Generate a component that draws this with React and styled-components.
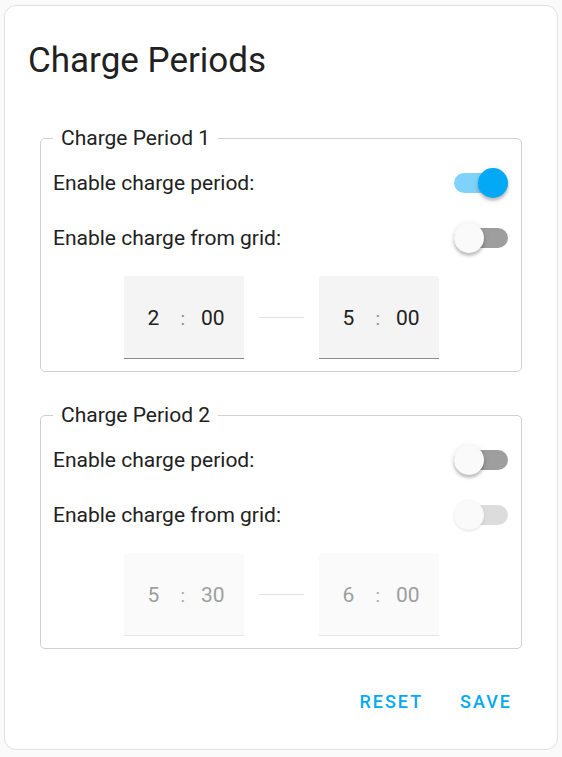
import React from "react";
import styled, { createGlobalStyle } from "styled-components";

const GlobalStyle = createGlobalStyle`
  html, body {
    margin: 0;
    padding: 0;
    background: #fafafa;
    font-family: Roboto, "Noto Sans", sans-serif;
    color: #212121;
  }
`;

const Page = styled.div`
  padding: 5px 4px 4px;
`;

const Card = styled.div`
  background: #fff;
  border: 1px solid #e0e0e0;
  border-radius: 12px;
  height: 745px;
  box-sizing: border-box;
  display: flex;
  flex-direction: column;
`;

const Title = styled.h1`
  margin: 0;
  padding: 35px 0 0 23px;
  font-size: 35px;
  font-weight: 400;
  line-height: 40px;
  color: #212121;
`;

const Periods = styled.div`
  display: flex;
  flex-direction: column;
  gap: 31px;
  padding: 45px 35px 0;
`;

const Fieldset = styled.fieldset`
  margin: 0;
  border: 1px solid #d0d0d0;
  border-radius: 5px;
  padding: 4px 12px 12px;
  min-width: 0;
`;

const Legend = styled.legend`
  padding: 0 8px;
  font-size: 21px;
  line-height: 25px;
  color: #212121;
`;

const Row = styled.div`
  display: flex;
  align-items: center;
  justify-content: space-between;
  height: 55px;
`;

const Label = styled.span`
  font-size: 21px;
  color: #212121;
`;

const Track = styled.div`
  position: relative;
  width: 54px;
  height: 20px;
  border-radius: 10px;
  margin-right: 1px;
  background: ${(p) => (p.$on ? "#7fd3fa" : p.$disabled ? "#dcdcdc" : "#9e9e9e")};
`;

const Thumb = styled.div`
  position: absolute;
  top: -5px;
  left: ${(p) => (p.$on ? "24px" : "0")};
  width: 30px;
  height: 30px;
  border-radius: 50%;
  background: ${(p) => (p.$on ? "#03a9f4" : "#fafafa")};
  box-shadow: ${(p) =>
    p.$disabled
      ? "0 1px 3px rgba(0,0,0,0.12)"
      : "0 3px 3px rgba(0,0,0,0.2), 0 1px 6px rgba(0,0,0,0.12)"};
`;

const TimeRow = styled.div`
  display: flex;
  align-items: center;
  justify-content: center;
  gap: 15px;
  margin-top: 11px;
`;

const TimeBox = styled.div`
  width: 120px;
  height: 83px;
  padding-top: 2px;
  box-sizing: border-box;
  border-radius: 4px 4px 0 0;
  background: ${(p) => (p.$disabled ? "#fafafa" : "#f4f4f4")};
  border-bottom: 1px solid ${(p) => (p.$disabled ? "#e6e6e6" : "#8c8c8c")};
  display: flex;
  align-items: center;
  justify-content: center;
  font-size: 21px;
  color: ${(p) => (p.$disabled ? "#9e9e9e" : "#212121")};
`;

const Field = styled.span`
  display: inline-block;
  min-width: 22px;
  text-align: center;
`;

const Colon = styled.span`
  margin: 0 16px;
  font-size: 19px;
  color: ${(p) => (p.$disabled ? "#a8a8a8" : "#8a8a8a")};
`;

const Dash = styled.div`
  width: 45px;
  height: 1px;
  background: #e0e0e0;
`;

const Actions = styled.div`
  margin-top: auto;
  display: flex;
  justify-content: flex-end;
  gap: 21px;
  padding: 0 37px 29px 0;
`;

const Button = styled.button`
  border: none;
  background: none;
  padding: 8px;
  font-family: inherit;
  font-size: 18px;
  font-weight: 500;
  letter-spacing: 2px;
  color: #03a9f4;
  cursor: pointer;
`;

function Toggle({ on, disabled }) {
  return (
    <Track $on={on} $disabled={disabled}>
      <Thumb $on={on} $disabled={disabled} />
    </Track>
  );
}

function Time({ h, m, disabled }) {
  return (
    <TimeBox $disabled={disabled}>
      <Field>{h}</Field>
      <Colon $disabled={disabled}>:</Colon>
      <Field>{m}</Field>
    </TimeBox>
  );
}

const periods = [
  { name: "Charge Period 1", enabled: true, grid: false, start: ["2", "00"], end: ["5", "00"] },
  { name: "Charge Period 2", enabled: false, grid: false, start: ["5", "30"], end: ["6", "00"] },
];

export default function App() {
  return (
    <>
      <GlobalStyle />
      <Page>
        <Card>
          <Title>Charge Periods</Title>
          <Periods>
            {periods.map((p) => (
              <Fieldset key={p.name}>
                <Legend>{p.name}</Legend>
                <Row>
                  <Label>Enable charge period:</Label>
                  <Toggle on={p.enabled} />
                </Row>
                <Row>
                  <Label>Enable charge from grid:</Label>
                  <Toggle on={p.grid} disabled={!p.enabled} />
                </Row>
                <TimeRow>
                  <Time h={p.start[0]} m={p.start[1]} disabled={!p.enabled} />
                  <Dash />
                  <Time h={p.end[0]} m={p.end[1]} disabled={!p.enabled} />
                </TimeRow>
              </Fieldset>
            ))}
          </Periods>
          <Actions>
            <Button>RESET</Button>
            <Button>SAVE</Button>
          </Actions>
        </Card>
      </Page>
    </>
  );
}
